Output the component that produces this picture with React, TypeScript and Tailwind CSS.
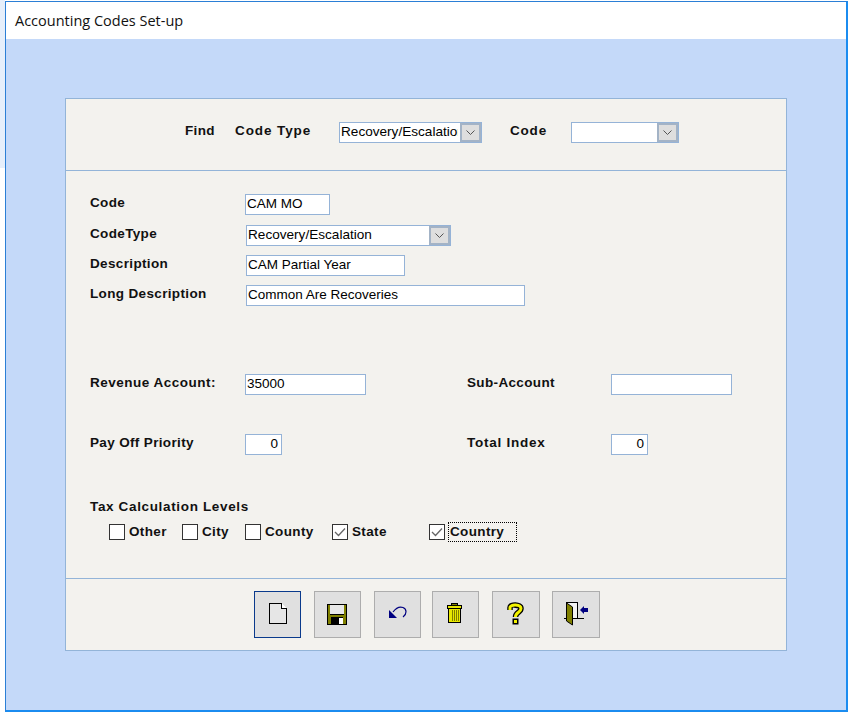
import React from "react";

const Chevron = () => (
  <svg width="9" height="5" viewBox="0 0 9 5" fill="none">
    <path d="M0.5 0.5 L4.5 4.5 L8.5 0.5" stroke="#555" strokeWidth="1" />
  </svg>
);

function Select({ value, w }: { value: string; w: string }) {
  return (
    <div className={`${w} h-[21px] flex bg-white border border-[#95b3d7]`}>
      <div className="flex-1 min-w-0 overflow-hidden whitespace-nowrap text-[13.6px] leading-[18px] ml-[1px] mr-[2px] text-black">{value}</div>
      <div className="w-[21px] flex items-center justify-center bg-[#dedede] border-2 border-[#a3b3c6]">
        <Chevron />
      </div>
    </div>
  );
}

function Field({ value, w, right }: { value: string; w: string; right?: boolean }) {
  return (
    <div className={`${w} h-[21px] bg-white border border-[#95b3d7] text-[13.5px] leading-[17px] px-[1px] text-black whitespace-nowrap overflow-hidden ${right ? "text-right pr-[3px]" : ""}`}>
      {value}
    </div>
  );
}

const labelCls = "text-[13.5px] leading-[16px] mt-[1px] font-bold text-[#111] whitespace-nowrap";
const t = "tracking-[0.35px]";

function Check({ label, checked, focus, cls }: { label: string; checked?: boolean; focus?: boolean; cls: string }) {
  return (
    <div className={`flex items-center ${cls}`}>
      <div className="w-[16px] h-[16px] bg-white border border-[#333] flex items-center justify-center shrink-0">
        {checked && (
          <svg width="12" height="10" viewBox="0 0 12 10" fill="none">
            <path d="M1 5 L4.5 8.5 L11 1.5" stroke="#666" strokeWidth="1.3" />
          </svg>
        )}
      </div>
      {focus ? (
        <div className="text-[13.5px] leading-[18px] font-bold text-[#111] tracking-[0.35px] whitespace-nowrap ml-[4px] pl-[1px] w-[67px] h-[18px] outline-1 outline-dotted outline-black">
          {label}
        </div>
      ) : (
        <div className="text-[13.5px] leading-[16px] font-bold text-[#111] tracking-[0.35px] whitespace-nowrap ml-[4px]">{label}</div>
      )}
    </div>
  );
}

function ToolButton({ w, cls, focus, children }: { w: string; cls?: string; focus?: boolean; children: React.ReactNode }) {
  return (
    <button className={`${w} h-[47px] bg-[#e0e0e0] border ${focus ? "border-[#0a3a8c]" : "border-[#adadad]"} ${cls ?? ""}`}>
      {children}
    </button>
  );
}

const svgCls = "block -m-[1px]";

export default function App() {
  return (
    <div className="w-[852px] h-[715px] bg-white flex items-start font-['Liberation_Sans',sans-serif]">
      <div className="w-[5px] h-[168px] bg-[#e6effb]" />
      <div className="w-[843px] h-[711px] mt-[1px] border border-[#2b7fd6] border-r-2 border-r-[#1b8cf0] border-b-2 border-b-[#1b8cf0] flex flex-col bg-[#c4d9f9]">
        <div className="h-[37px] bg-white flex items-center pl-[9px] text-[14.5px] text-[#111] font-['Open_Sans',sans-serif] shrink-0">
          Accounting Codes Set-up
        </div>
        <div className="mt-[59px] ml-[59px] w-[722px] h-[553px] bg-[#f3f2ee] border border-[#93b4d8] flex flex-col">
          {/* Find bar */}
          <div className="h-[72px] border-b border-[#93b4d8] flex items-start pt-[23px] shrink-0">
            <div className={`${labelCls} ${t} ml-[119px] w-[50px]`}>Find</div>
            <div className={`${labelCls} w-[104px] tracking-[0.9px]`}>Code Type</div>
            <Select value="Recovery/Escalation" w="w-[143px]" />
            <div className={`${labelCls} ml-[28px] w-[61px] tracking-[0.8px]`}>Code</div>
            <Select value="" w="w-[108px]" />
          </div>

          {/* Form body */}
          <div className="h-[408px] border-b border-[#93b4d8] pl-[24px] pt-[23px] shrink-0">
            <div className="flex items-start h-[21px]">
              <div className={`${labelCls} ${t} w-[155px]`}>Code</div>
              <Field value="CAM MO" w="w-[85px]" />
            </div>
            <div className="flex items-start h-[21px] mt-[10px]">
              <div className={`${labelCls} ${t} w-[156px]`}>CodeType</div>
              <Select value="Recovery/Escalation" w="w-[205px]" />
            </div>
            <div className="flex items-start h-[21px] mt-[9px]">
              <div className={`${labelCls} ${t} w-[156px]`}>Description</div>
              <Field value="CAM Partial Year" w="w-[159px]" />
            </div>
            <div className="flex items-start h-[21px] mt-[9px]">
              <div className={`${labelCls} ${t} w-[156px]`}>Long Description</div>
              <Field value="Common Are Recoveries" w="w-[279px]" />
            </div>

            <div className="flex items-start h-[21px] mt-[68px]">
              <div className={`${labelCls} w-[155px] tracking-[0.5px]`}>Revenue Account:</div>
              <Field value="35000" w="w-[121px]" />
              <div className={`${labelCls} ${t} ml-[101px] w-[144px]`}>Sub-Account</div>
              <Field value="" w="w-[121px]" />
            </div>
            <div className="flex items-start h-[21px] mt-[39px]">
              <div className={`${labelCls} ${t} w-[155px]`}>Pay Off Priority</div>
              <Field value="0" w="w-[37px]" right />
              <div className={`${labelCls} ml-[185px] w-[144px] tracking-[0.75px]`}>Total Index</div>
              <Field value="0" w="w-[37px]" right />
            </div>

            <div className="text-[13.5px] leading-[16px] mt-[44px] font-bold text-[#111] tracking-[0.65px] whitespace-nowrap">Tax Calculation Levels</div>
            <div className="flex items-center h-[20px] mt-[7px] ml-[19px]">
              <Check label="Other" cls="w-[73px]" />
              <Check label="City" cls="w-[63px]" />
              <Check label="County" cls="w-[87px]" />
              <Check label="State" checked cls="w-[97px]" />
              <Check label="Country" checked focus cls="w-[90px]" />
            </div>
          </div>

          {/* Toolbar */}
          <div className="flex-1 flex items-start pt-[12px] pl-[188px]">
            <ToolButton w="w-[47px]" focus>
              <svg className={svgCls} width="47" height="47" viewBox="0 0 47 47" fill="none" shapeRendering="crispEdges">
                <path d="M15.5 12.5 H27.5 L32.5 17.5 V32.5 H15.5 Z" fill="#e6e6e6" stroke="#000" />
                <path d="M27.5 12.5 V17.5 H32.5" fill="#fff" stroke="#000" />
              </svg>
            </ToolButton>
            <ToolButton w="w-[47px]" cls="ml-[13px]">
              <svg className={svgCls} width="47" height="47" viewBox="0 0 47 47" fill="none" shapeRendering="crispEdges">
                <rect x="13.5" y="13.5" width="19" height="20" fill="#808000" stroke="#000" />
                <rect x="16" y="14" width="14" height="9" fill="#e8e8e8" />
                <rect x="16" y="23" width="14" height="1" fill="#000" />
                <rect x="17" y="26" width="12" height="8" fill="#000" />
                <rect x="25" y="27" width="4" height="6" fill="#fff" />
              </svg>
            </ToolButton>
            <ToolButton w="w-[47px]" cls="ml-[13px]">
              <svg className={svgCls} width="47" height="47" viewBox="0 0 47 47" fill="none">
                <path d="M15 27 V19 L23 27 Z" fill="#000080" />
                <path d="M19 21 C22 17 26 15.5 29 16.5 C33 18 33 23 29 26" stroke="#000080" strokeWidth="1.2" />
              </svg>
            </ToolButton>
            <ToolButton w="w-[47px]" cls="ml-[11px]">
              <svg className={svgCls} width="47" height="47" viewBox="0 0 47 47" fill="none" shapeRendering="crispEdges">
                <rect x="19.5" y="12.5" width="6" height="2" fill="#808000" stroke="#000" />
                <rect x="15.5" y="14.5" width="14" height="3" fill="#e8e800" stroke="#000" />
                <rect x="16.5" y="17.5" width="12" height="14" fill="#e8e800" stroke="#000" />
                <path d="M20 19V30M22 19V30M24 19V30M26 19V30" stroke="#808000" />
              </svg>
            </ToolButton>
            <ToolButton w="w-[48px]" cls="ml-[13px]">
              <svg className={svgCls} width="48" height="47" viewBox="0 0 48 47" fill="none">
                <path d="M18 19 V16.5 C18 13 29 13 29 17.5 C29 21.5 23.5 21 23.5 26" stroke="#000" strokeWidth="5.5" />
                <rect x="20.5" y="27.5" width="6" height="6" fill="#000" />
                <path d="M18 19 V16.5 C18 13 29 13 29 17.5 C29 21.5 23.5 21 23.5 26" stroke="#f2f200" strokeWidth="3" />
                <rect x="22" y="29" width="3" height="3" fill="#f2f200" />
              </svg>
            </ToolButton>
            <ToolButton w="w-[48px]" cls="ml-[12px]">
              <svg className={svgCls} width="48" height="47" viewBox="0 0 48 47" fill="none">
                <rect x="14.5" y="11.5" width="11" height="16" fill="#f3f3f3" stroke="#000" />
                <path d="M12 27.5 H32" stroke="#000" />
                <path d="M14.5 12 L20.5 16 V34 L14.5 30 Z" fill="#808000" stroke="#000" />
                <path d="M28 19 L32 15 V17 H36 V21 H32 V23 Z" fill="#000080" />
              </svg>
            </ToolButton>
          </div>
        </div>
      </div>
    </div>
  );
}
